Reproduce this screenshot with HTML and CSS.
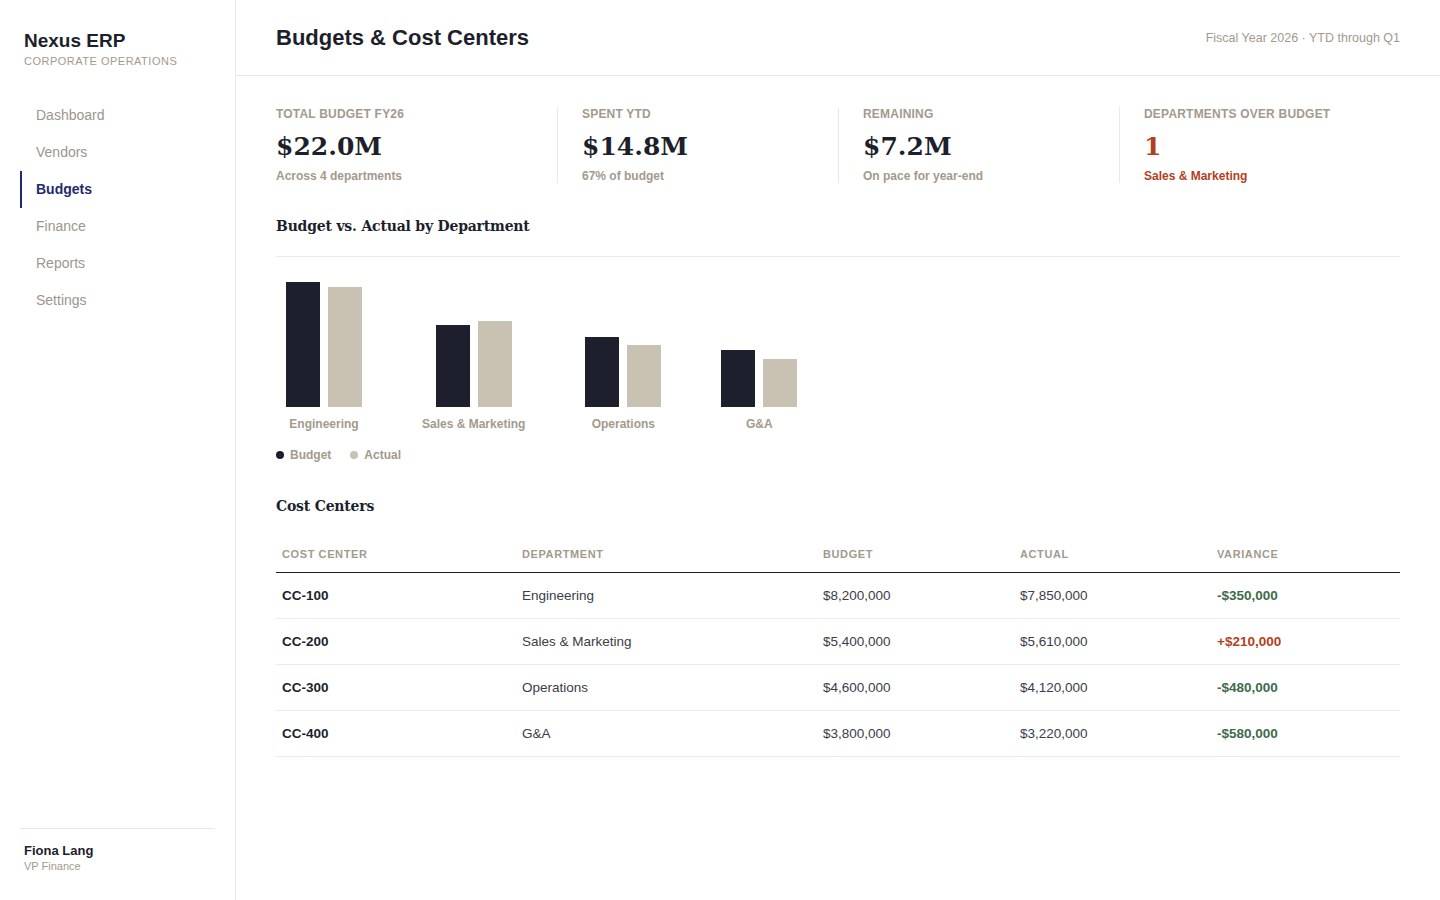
FILE: index.html
```html
<!DOCTYPE html>
<html lang="en">
<head>
<meta charset="utf-8">
<title>Budgets & Cost Centers — Nexus ERP</title>
<link rel="stylesheet" href="styles.css">
</head>
<body>
<div class="app">
  <aside class="sidebar">
    <div class="brand">
      <div class="brand-name">Nexus ERP</div>
      <div class="brand-sub">CORPORATE OPERATIONS</div>
    </div>
    <nav class="nav">
      <a class="nav-item">Dashboard</a>
      <a class="nav-item">Vendors</a>
      <a class="nav-item active">Budgets</a>
      <a class="nav-item">Finance</a>
      <a class="nav-item">Reports</a>
      <a class="nav-item">Settings</a>
    </nav>
    <div class="user">
      <div class="user-name">Fiona Lang</div>
      <div class="user-role">VP Finance</div>
    </div>
  </aside>
  <main class="main">
    <header class="topbar">
      <h1 class="page-title">Budgets &amp; Cost Centers</h1>
      <div class="period">Fiscal Year 2026 · YTD through Q1</div>
    </header>
    <div class="content">
      <section class="kpis">
        <div class="kpi">
          <div class="kpi-label">TOTAL BUDGET FY26</div>
          <div class="kpi-value">$22.0M</div>
          <div class="kpi-sub">Across 4 departments</div>
        </div>
        <div class="kpi">
          <div class="kpi-label">SPENT YTD</div>
          <div class="kpi-value">$14.8M</div>
          <div class="kpi-sub">67% of budget</div>
        </div>
        <div class="kpi">
          <div class="kpi-label">REMAINING</div>
          <div class="kpi-value">$7.2M</div>
          <div class="kpi-sub">On pace for year-end</div>
        </div>
        <div class="kpi">
          <div class="kpi-label">DEPARTMENTS OVER BUDGET</div>
          <div class="kpi-value alert">1</div>
          <div class="kpi-sub alert">Sales &amp; Marketing</div>
        </div>
      </section>

      <section class="chart-section">
        <h2 class="section-title chart-title">Budget vs. Actual by Department</h2>
        <div class="chart">
          <div class="group">
            <div class="bars">
              <div class="bar budget" style="height:125px"></div>
              <div class="bar actual" style="height:120px"></div>
            </div>
            <div class="group-label">Engineering</div>
          </div>
          <div class="group">
            <div class="bars">
              <div class="bar budget" style="height:82px"></div>
              <div class="bar actual" style="height:86px"></div>
            </div>
            <div class="group-label">Sales &amp; Marketing</div>
          </div>
          <div class="group">
            <div class="bars">
              <div class="bar budget" style="height:70px"></div>
              <div class="bar actual" style="height:62px"></div>
            </div>
            <div class="group-label">Operations</div>
          </div>
          <div class="group">
            <div class="bars">
              <div class="bar budget" style="height:57px"></div>
              <div class="bar actual" style="height:48px"></div>
            </div>
            <div class="group-label">G&amp;A</div>
          </div>
        </div>
        <div class="legend">
          <span class="legend-item"><span class="dot budget"></span>Budget</span>
          <span class="legend-item"><span class="dot actual"></span>Actual</span>
        </div>
      </section>

      <section class="table-section">
        <h2 class="section-title">Cost Centers</h2>
        <table class="cc-table">
          <colgroup>
            <col class="c1"><col class="c2"><col class="c3"><col class="c4"><col class="c5">
          </colgroup>
          <thead>
            <tr><th>COST CENTER</th><th>DEPARTMENT</th><th>BUDGET</th><th>ACTUAL</th><th>VARIANCE</th></tr>
          </thead>
          <tbody>
            <tr><td class="code">CC-100</td><td class="dept">Engineering</td><td>$8,200,000</td><td>$7,850,000</td><td class="var under">-$350,000</td></tr>
            <tr><td class="code">CC-200</td><td class="dept">Sales &amp; Marketing</td><td>$5,400,000</td><td>$5,610,000</td><td class="var over">+$210,000</td></tr>
            <tr><td class="code">CC-300</td><td class="dept">Operations</td><td>$4,600,000</td><td>$4,120,000</td><td class="var under">-$480,000</td></tr>
            <tr><td class="code">CC-400</td><td class="dept">G&amp;A</td><td>$3,800,000</td><td>$3,220,000</td><td class="var under">-$580,000</td></tr>
          </tbody>
        </table>
      </section>
    </div>
  </main>
</div>
</body>
</html>
```

FILE: styles.css
```css
* { box-sizing: border-box; }
html, body { margin: 0; padding: 0; }
body {
  font-family: "Liberation Sans", Arial, sans-serif;
  color: #1d1f2c;
  background: #ffffff;
}
.app {
  display: flex;
  width: 1440px;
  height: 900px;
}

/* Sidebar */
.sidebar {
  width: 236px;
  flex: 0 0 236px;
  border-right: 1px solid #ece9e2;
  display: flex;
  flex-direction: column;
  padding: 29px 20px 27px 20px;
}
.brand { padding-left: 4px; }
.brand-name {
  font-size: 19px;
  font-weight: 700;
  line-height: 24px;
  color: #1d1f2c;
}
.brand-sub {
  font-size: 11px;
  line-height: 14px;
  letter-spacing: 0.5px;
  color: #a39a8c;
  margin-top: 1px;
}
.nav {
  display: flex;
  flex-direction: column;
  margin-top: 29px;
}
.nav-item {
  display: block;
  height: 37px;
  line-height: 37px;
  font-size: 14px;
  color: #9c968e;
  padding-left: 14px;
  border-left: 2px solid transparent;
}
.nav-item.active {
  border-left-color: #1f2a6e;
  color: #1f2a6e;
  font-weight: 700;
}
.user {
  margin-top: auto;
  border-top: 1px solid #ece9e2;
  padding: 13px 4px 0 4px;
}
.user-name {
  font-size: 13px;
  font-weight: 700;
  line-height: 17px;
  color: #1d1f2c;
}
.user-role {
  font-size: 11px;
  line-height: 14px;
  color: #a39a8c;
}

/* Main */
.main {
  flex: 1;
  display: flex;
  flex-direction: column;
  min-width: 0;
}
.topbar {
  height: 76px;
  border-bottom: 1px solid #ece9e2;
  display: flex;
  align-items: center;
  justify-content: space-between;
  padding: 0 40px 0 40px;
}
.page-title {
  margin: 0;
  font-size: 22px;
  font-weight: 700;
  line-height: 28px;
  color: #1d1f2c;
}
.period {
  font-size: 12.5px;
  color: #a39a8c;
}
.content {
  padding: 31px 40px 0 40px;
}

/* KPIs */
.kpis {
  display: grid;
  grid-template-columns: repeat(4, 1fr);
}
.kpi {
  padding: 0 24px 0 0;
}
.kpi + .kpi {
  border-left: 1px solid #ece9e2;
  padding-left: 24px;
}
.kpi-label {
  font-size: 12px;
  font-weight: 700;
  line-height: 14px;
  letter-spacing: 0.2px;
  color: #a39a8c;
}
.kpi-value {
  font-family: "DejaVu Serif", "Liberation Serif", Georgia, serif;
  font-size: 25px;
  font-weight: 700;
  line-height: 34px;
  margin-top: 9px;
  color: #1d1f2c;
}
.kpi-sub {
  font-size: 12px;
  font-weight: 700;
  line-height: 14px;
  color: #a39a8c;
  margin-top: 5px;
}
.kpi-value.alert { color: #b23f1e; }
.kpi-sub.alert { color: #b23f1e; }

/* Section titles */
.section-title {
  font-family: "DejaVu Serif", "Liberation Serif", Georgia, serif;
  font-size: 14px;
  font-weight: 700;
  letter-spacing: -0.2px;
  line-height: 20px;
  margin: 0;
  color: #1d1f2c;
}
.chart-section { margin-top: 33px; }
.chart-title {
  padding-bottom: 20px;
  border-bottom: 1px solid #ece9e2;
}
.chart {
  display: flex;
  align-items: flex-start;
  gap: 60px;
  padding: 25px 10px 0 10px;
}
.group {
  display: flex;
  flex-direction: column;
  align-items: center;
}
.bars {
  display: flex;
  align-items: flex-end;
  gap: 8px;
  height: 125px;
}
.bar { width: 34px; }
.bar.budget { background: #1e1f2c; }
.bar.actual { background: #c9c1b2; }
.group-label {
  margin-top: 10px;
  font-size: 12px;
  font-weight: 700;
  line-height: 14px;
  color: #a39a8c;
  white-space: nowrap;
}
.legend {
  display: flex;
  gap: 19px;
  margin-top: 17px;
  font-size: 12px;
  font-weight: 700;
  line-height: 14px;
  color: #a39a8c;
}
.legend-item {
  display: inline-flex;
  align-items: center;
}
.dot {
  width: 8px;
  height: 8px;
  border-radius: 50%;
  margin-right: 6px;
}
.dot.budget { background: #1e1f2c; }
.dot.actual { background: #c9c1b2; }

/* Table */
.table-section { margin-top: 34px; }
.cc-table {
  width: 100%;
  border-collapse: collapse;
  margin-top: 31px;
  table-layout: fixed;
}
.c1 { width: 240px; }
.c2 { width: 301px; }
.c3 { width: 197px; }
.c4 { width: 197px; }
.c5 { width: 189px; }
.cc-table th {
  text-align: left;
  font-size: 11px;
  font-weight: 700;
  letter-spacing: 0.6px;
  color: #a39a8c;
  padding: 0 6px 11px 6px;
  line-height: 14px;
  border-bottom: 1.5px solid #1d1f2c;
}
.cc-table td {
  font-size: 13.5px;
  line-height: 17px;
  color: #3b3d47;
  padding: 14px 6px 14px 6px;
  border-bottom: 1px solid #efece6;
  height: 46px;
}
.cc-table td.code {
  font-weight: 700;
  color: #1d1f2c;
}
.cc-table td.var { font-weight: 700; }
.cc-table td.under { color: #3e6b4a; }
.cc-table td.over { color: #b23f1e; }
```
